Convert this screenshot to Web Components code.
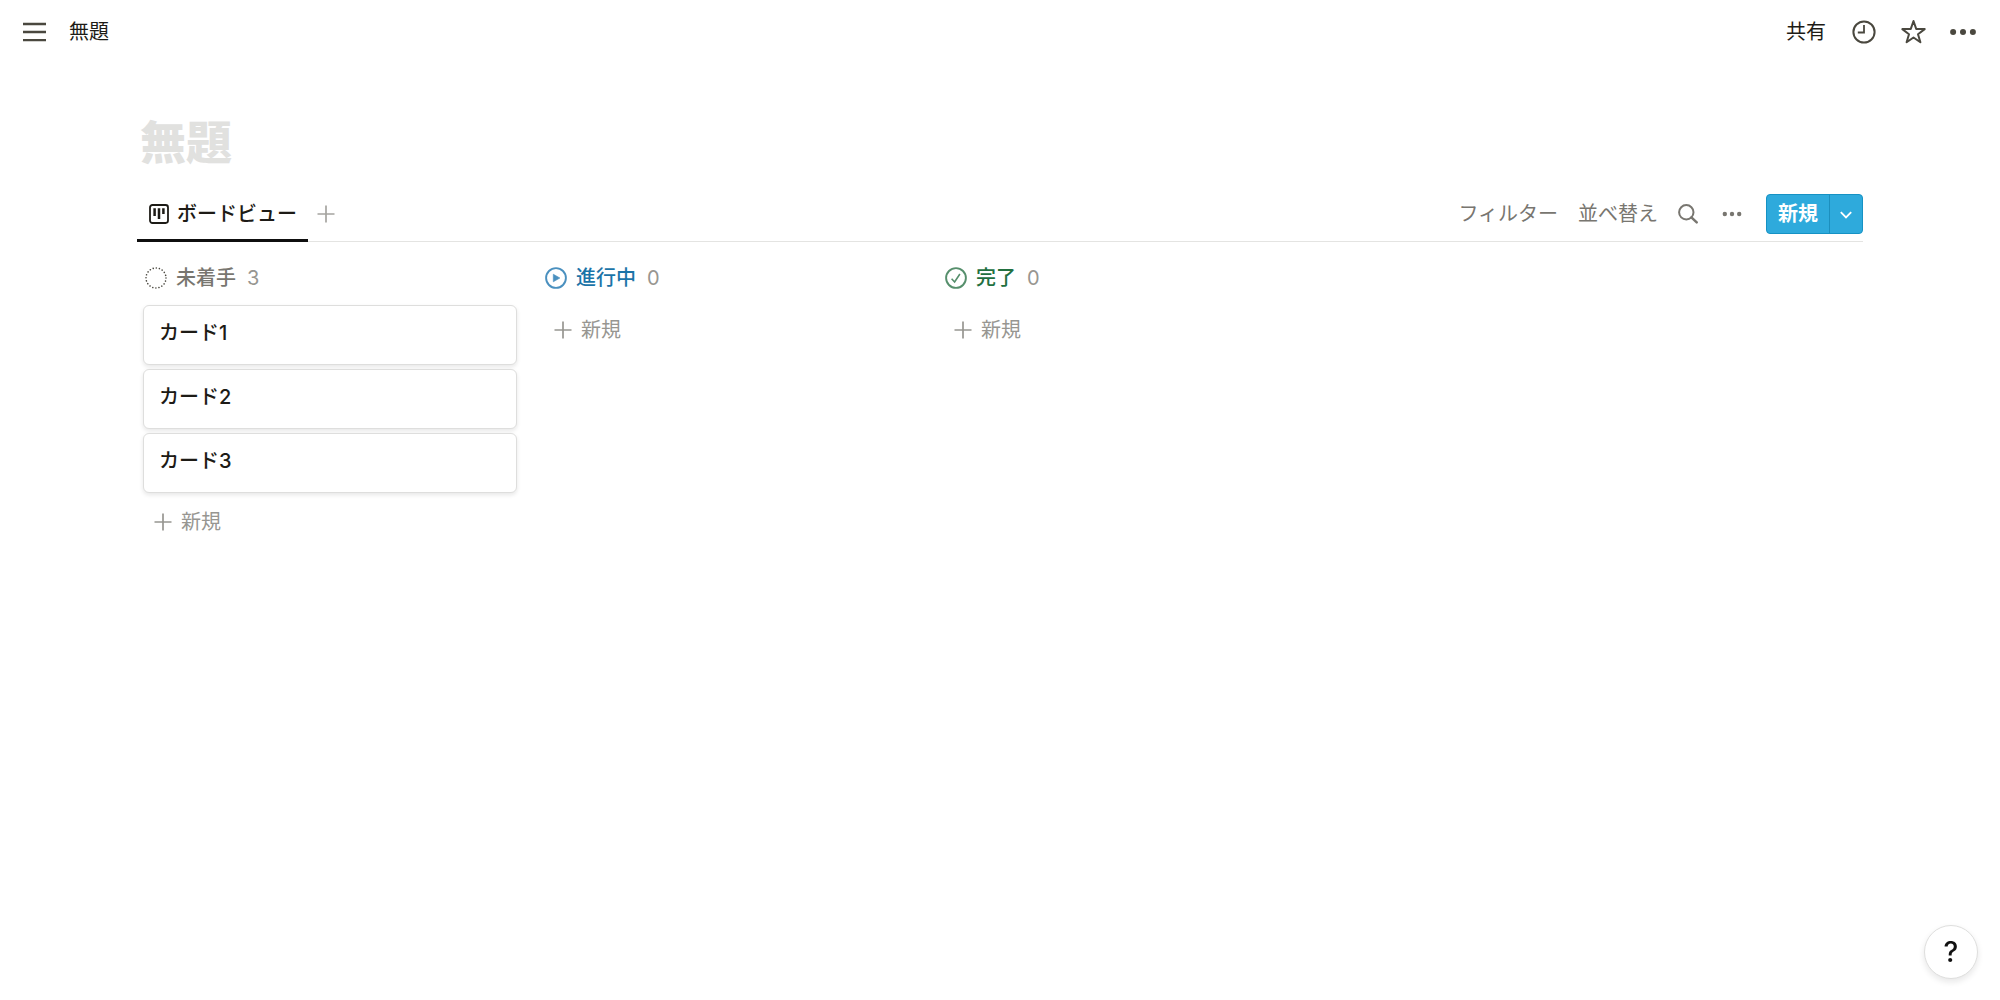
<!DOCTYPE html>
<html lang="ja">
<head>
<meta charset="utf-8">
<meta name="viewport" content="width=device-width, initial-scale=1">
<title>無題</title>
<style>
  body {
    margin: 0;
    min-height: 100vh;
    background: #fff;
    color: #1d1b16;
    font: 400 20px/30px Inter, "Noto Sans CJK JP", sans-serif;
  }
</style>
</head>
<body>
<board-app></board-app>
<script>
const reset = `
  *, *::before, *::after { box-sizing: border-box; }
  :host { display: block; }
  :host([hidden]) { display: none; }
  button { font: inherit; color: inherit; background: none; border: 0; margin: 0; padding: 0; cursor: pointer; white-space: nowrap; }
  svg { display: block; flex: none; }
`;

function define(name, html, setup) {
  const tpl = document.createElement('template');
  tpl.innerHTML = html;
  customElements.define(name, class extends HTMLElement {
    constructor() {
      super();
      this.attachShadow({ mode: 'open' }).append(tpl.content.cloneNode(true));
    }
    connectedCallback() { if (setup) setup(this, this.shadowRoot); }
  });
}

const icons = {
  menu: [24, 24, '<path d="M1 4h23M1 12h23M1 20.200h23" stroke="currentColor" stroke-width="2.300"/>'],
  clock: [24, 24, '<circle cx="12" cy="12" r="10.600" fill="none" stroke="currentColor" stroke-width="2"/><path d="M12 5v7.500H5.800" fill="none" stroke="currentColor" stroke-width="1.8"/>'],
  star: [26, 26, '<path d="M13.500 2l2.700 7.900 8.500.2-6.700 5.100 2.400 8.100-6.900-4.800-6.900 4.800 2.400-8.100-6.700-5.100 8.500-.2z" fill="none" stroke="currentColor" stroke-width="2" stroke-linejoin="round"/>'],
  more: [26, 8, '<g fill="currentColor"><circle cx="3.100" cy="4" r="3"/><circle cx="13" cy="4" r="3"/><circle cx="22.900" cy="4" r="3"/></g>'],
  dots: [20, 6, '<g fill="currentColor"><circle cx="2.8" cy="3" r="2.2"/><circle cx="10" cy="3" r="2.2"/><circle cx="17.2" cy="3" r="2.2"/></g>'],
  board: [20, 20, '<rect x="1" y="1" width="18" height="18" rx="2.400" fill="none" stroke="currentColor" stroke-width="1.8"/><path d="M5.6 4.200v7.900M10 4.200v10.900M14.4 4.200v5.900" stroke="currentColor" stroke-width="2.500"/>'],
  plus: [18, 18, '<path d="M9 .5v17M.5 9h17" stroke="currentColor" stroke-width="1.7"/>'],
  search: [20, 20, '<circle cx="8.300" cy="8.300" r="7.200" fill="none" stroke="currentColor" stroke-width="2"/><path d="M13.400 13.400l5.300 5" stroke="currentColor" stroke-width="2.5" stroke-linecap="round"/>'],
  chevron: [14, 10, '<path d="M1.8 2.2L7 7.500l5.200-5.300" fill="none" stroke="currentColor" stroke-width="1.8"/>'],
  todo: [22, 22, '<circle cx="11" cy="11" r="10" fill="none" stroke="currentColor" stroke-width="1.600" stroke-linecap="round" stroke-dasharray="0.010 3.132"/>'],
  doing: [22, 22, '<circle cx="11" cy="11" r="9.900" fill="none" stroke="currentColor" stroke-width="1.900"/><path d="M8.300 7.200v7.600l6.600-3.800z" fill="currentColor" stroke="currentColor" stroke-width=".6" stroke-linejoin="round"/>'],
  done: [22, 22, '<circle cx="11" cy="11" r="9.900" fill="none" stroke="currentColor" stroke-width="1.900"/><path d="M6.600 11.800l3 3.200 5.300-8" fill="none" stroke="currentColor" stroke-width="1.600"/>']
};

define('ui-icon', `<style>${reset} :host { flex: none; }</style><div></div>`, (el, root) => {
  const [w, h, body] = icons[el.getAttribute('name')];
  root.querySelector('div').innerHTML = `<svg width="${w}" height="${h}" viewBox="0 0 ${w} ${h}" aria-hidden="true">${body}</svg>`;
});

define('top-bar', `
  <style>${reset}
    header { display: flex; align-items: center; justify-content: space-between; height: 64px; padding: 0 24px 0 22px; }
    nav, .actions { display: flex; align-items: center; gap: 23px; }
    .actions { gap: 24px; }
    button { display: flex; align-items: center; }
    .share { margin-right: 2px; }
    ui-icon { color: #4a483f; }
  </style>
  <header>
    <nav><button aria-label="メニュー"><ui-icon name="menu"></ui-icon></button><button><slot></slot></button></nav>
    <div class="actions">
      <button class="share">共有</button>
      <button aria-label="更新履歴"><ui-icon name="clock"></ui-icon></button>
      <button aria-label="お気に入り"><ui-icon name="star"></ui-icon></button>
      <button aria-label="その他"><ui-icon name="more"></ui-icon></button>
    </div>
  </header>`);

define('page-title', `
  <style>${reset}
    h1 { margin: 0; padding: 50px 0 22px 3px; font-size: 46px; line-height: 56px; font-weight: 900; color: #e1e1df; }
  </style>
  <h1><slot></slot></h1>`);

define('split-button', `
  <style>${reset}
    :host { flex: none; }
    div { display: flex; height: 40px; color: #fff; background: #2eaadc; border: 1px solid #1692c4; border-radius: 4px; overflow: hidden; }
    .main { width: 62px; font-weight: 700; }
    .drop { display: flex; align-items: center; justify-content: center; width: 33px; padding-top: 2px; border-left: 1px solid #1c8fbe; }
  </style>
  <div><button class="main"><slot></slot></button><button class="drop" aria-label="テンプレート"><ui-icon name="chevron"></ui-icon></button></div>`);

define('view-bar', `
  <style>${reset}
    section { display: flex; justify-content: space-between; height: 50px; box-shadow: inset 0 -1px #e4e4e2; }
    .tabs, .tools { display: flex; }
    .tab { display: flex; align-items: center; gap: 8px; padding: 0 11px 4px 12px; border-bottom: 3px solid #0f0f0f; font-weight: 500; height: 50px; }
    .add { padding: 0 9px 7px; color: #a5a4a0; }
    .tools { align-items: center; gap: 20px; height: 43px; color: #787670; }
    .tools split-button { margin-left: 4px; }
    .icon { padding-right: 4px; }
  </style>
  <section>
    <div class="tabs">
      <button class="tab"><ui-icon name="board"></ui-icon><slot></slot></button>
      <button class="add" aria-label="ビューを追加"><ui-icon name="plus"></ui-icon></button>
    </div>
    <div class="tools">
      <button>フィルター</button>
      <button>並べ替え</button>
      <button class="icon" aria-label="検索"><ui-icon name="search"></ui-icon></button>
      <button aria-label="その他"><ui-icon name="dots"></ui-icon></button>
      <split-button>新規</split-button>
    </div>
  </section>`);

define('board-card', `
  <style>${reset}
    article { height: 60px; padding: 12px 15px; border: 1px solid #dededd; border-radius: 6px; background: #fff; font-weight: 500;
      box-shadow: 0 2px 4px rgba(15,15,15,.1); }
  </style>
  <article><slot></slot></article>`);

define('board-column', `
  <style>${reset}
    :host { width: 374px; }
    header { display: flex; align-items: center; height: 32px; padding-left: 2px; margin-bottom: 11px; }
    h2 { margin: 0 11px 0 9px; font: inherit; font-weight: 500; color: var(--label); }
    ui-icon { color: var(--mark); }
    span { color: #979691; }
    .cards { display: flex; flex-direction: column; gap: 4px; }
    .new { display: flex; align-items: center; gap: 9px; height: 40px; margin-top: 5px; padding: 0 11px; color: #979691; }
    .new ui-icon { color: inherit; }
    .filled .new { margin-top: 9px; }
  </style>
  <section>
    <header><i></i><h2></h2><span></span></header>
    <div class="cards"><slot></slot></div>
    <button class="new"><ui-icon name="plus"></ui-icon>新規</button>
  </section>`, (el, root) => {
  const count = el.querySelectorAll('board-card').length;
  const icon = document.createElement('ui-icon');
  icon.setAttribute('name', el.getAttribute('status'));
  root.querySelector('i').replaceWith(icon);
  root.querySelector('h2').textContent = el.getAttribute('label');
  root.querySelector('span').textContent = count;
  root.querySelector('section').classList.toggle('filled', count > 0);
});

define('help-button', `
  <style>${reset}
    :host { position: fixed; right: 22px; bottom: 21px; }
    button { display: block; width: 54px; height: 54px; border: 1px solid #dededd; border-radius: 50%; background: #fff; font-size: 28px; font-weight: 500; color: #111;
      box-shadow: 0 3px 6px rgba(15,15,15,.1); }
  </style>
  <button aria-label="ヘルプ"><slot></slot></button>`);

define('board-app', `
  <style>${reset}
    main { padding: 0 137px; }
    .board { display: flex; gap: 26px; padding: 20px 6px; }
    board-column { flex: none; }
    .todo { --label: #787670; --mark: #4a483f; }
    .doing { --label: #1b74a8; --mark: #4a90bf; }
    .done { --label: #22703f; --mark: #568f6c; }
  </style>
  <top-bar>無題</top-bar>
  <main>
    <page-title>無題</page-title>
    <view-bar>ボードビュー</view-bar>
    <div class="board">
      <board-column class="todo" status="todo" label="未着手">
        <board-card>カード1</board-card>
        <board-card>カード2</board-card>
        <board-card>カード3</board-card>
      </board-column>
      <board-column class="doing" status="doing" label="進行中"></board-column>
      <board-column class="done" status="done" label="完了"></board-column>
    </div>
  </main>
  <help-button>?</help-button>`);
</script>
</body>
</html>
